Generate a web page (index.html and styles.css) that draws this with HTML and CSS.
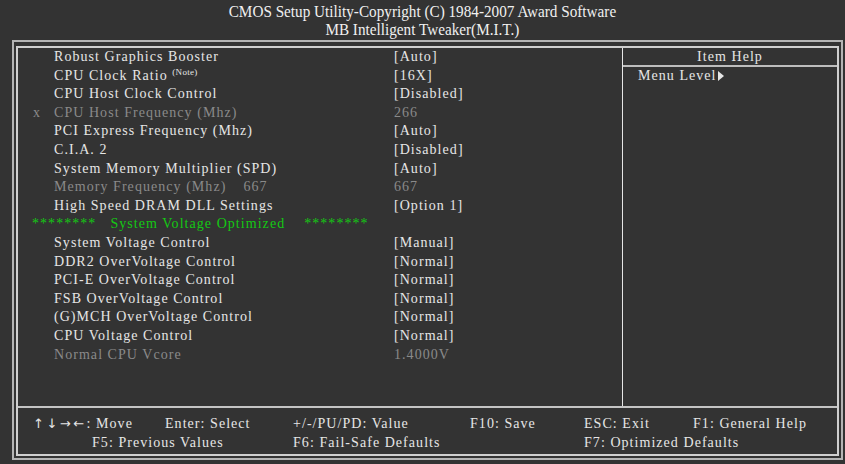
FILE: index.html
```html
<!DOCTYPE html>
<html>
<head>
<meta charset="utf-8">
<link rel="stylesheet" href="styles.css">
</head>
<body>
<header class="title">
  <div class="title-line"><span>CMOS Setup Utility-Copyright (C) 1984-2007 Award Software</span></div>
  <div class="title-line"><span>MB Intelligent Tweaker(M.I.T.)</span></div>
</header>
<div class="frame">
  <div class="panel">
    <div class="main">
      <div class="list">
        <div class="row"><span class="mark"></span><span class="label">Robust Graphics Booster</span><span class="value">[Auto]</span></div>
        <div class="row"><span class="mark"></span><span class="label">CPU Clock Ratio <sup class="note">(Note)</sup></span><span class="value">[16X]</span></div>
        <div class="row"><span class="mark"></span><span class="label">CPU Host Clock Control</span><span class="value">[Disabled]</span></div>
        <div class="row dim"><span class="mark">x</span><span class="label">CPU Host Frequency (Mhz)</span><span class="value">266</span></div>
        <div class="row"><span class="mark"></span><span class="label">PCI Express Frequency (Mhz)</span><span class="value">[Auto]</span></div>
        <div class="row"><span class="mark"></span><span class="label">C.I.A. 2</span><span class="value">[Disabled]</span></div>
        <div class="row"><span class="mark"></span><span class="label">System Memory Multiplier (SPD)</span><span class="value">[Auto]</span></div>
        <div class="row dim"><span class="mark"></span><span class="label">Memory Frequency (Mhz)<span class="inline-val">667</span></span><span class="value">667</span></div>
        <div class="row"><span class="mark"></span><span class="label">High Speed DRAM DLL Settings</span><span class="value">[Option 1]</span></div>
        <div class="section"><span class="stars">********</span><span class="section-name">System Voltage Optimized</span><span class="stars stars-r">********</span></div>
        <div class="row"><span class="mark"></span><span class="label">System Voltage Control</span><span class="value">[Manual]</span></div>
        <div class="row"><span class="mark"></span><span class="label">DDR2 OverVoltage Control</span><span class="value">[Normal]</span></div>
        <div class="row"><span class="mark"></span><span class="label">PCI-E OverVoltage Control</span><span class="value">[Normal]</span></div>
        <div class="row"><span class="mark"></span><span class="label">FSB OverVoltage Control</span><span class="value">[Normal]</span></div>
        <div class="row"><span class="mark"></span><span class="label">(G)MCH OverVoltage Control</span><span class="value">[Normal]</span></div>
        <div class="row"><span class="mark"></span><span class="label">CPU Voltage Control</span><span class="value">[Normal]</span></div>
        <div class="row dim"><span class="mark"></span><span class="label">Normal CPU Vcore</span><span class="value">1.4000V</span></div>
      </div>
      <div class="help">
        <div class="help-head">Item Help</div>
        <div class="help-body">Menu Level<svg class="tri" width="6" height="10" viewBox="0 0 6 10"><path d="M0 0 L6 5 L0 10 Z" fill="#e6e6e6"/></svg></div>
      </div>
    </div>
    <div class="footer">
      <span class="k c1"><span class="arrows">↑↓→←</span>: Move</span>
      <span class="k c2">Enter: Select</span>
      <span class="k c3">+/-/PU/PD: Value</span>
      <span class="k c4">F10: Save</span>
      <span class="k c5">ESC: Exit</span>
      <span class="k c6">F1: General Help</span>
      <span class="k r2 f5">F5: Previous Values</span>
      <span class="k r2 c3">F6: Fail-Safe Defaults</span>
      <span class="k r2 f7">F7: Optimized Defaults</span>
    </div>
  </div>
</div>
</body>
</html>
```

FILE: styles.css
```css
html, body {
  margin: 0;
  padding: 0;
  background: #333333;
}
body {
  width: 845px;
  height: 464px;
  overflow: hidden;
  color: #e6e6e6;
  font-family: "Liberation Serif", "Times New Roman", serif;
  font-size: 14px;
  letter-spacing: 1.05px;
}
.title {
  height: 40px;
  padding-top: 3px;
  box-sizing: border-box;
  text-align: center;
  font-size: 17px;
  letter-spacing: 0;
  line-height: 18px;
  color: #f0f0f0;
}
.title-line span {
  display: inline-block;
  transform: scaleX(0.895);
}
.frame {
  margin: 0 2px 4px 12px;
  border: 2px solid #b4b4b4;
  padding: 4px 2px 2px 2px;
}
.panel {
  border: 2px solid #cfcfcf;
  height: 406px;
  display: flex;
  flex-direction: column;
}
.main {
  display: flex;
  height: 358px;
}
.list {
  width: 604px;
}
.row {
  display: grid;
  grid-template-columns: 36px 340px 1fr;
  line-height: 18.6px;
  height: 18.6px;
  white-space: nowrap;
}
.mark {
  padding-left: 15px;
}
.dim {
  color: #8a8a8a;
}
.note {
  font-size: 9px;
  letter-spacing: 0.3px;
  vertical-align: 5px;
  line-height: 0;
}
.inline-val {
  margin-left: 17px;
}
.section {
  height: 18.6px;
  line-height: 18.6px;
  padding-left: 14px;
  color: #14c814;
  white-space: nowrap;
}
.section-name {
  margin-left: 14px;
}
.stars-r {
  margin-left: 19px;
}
.help {
  flex: 1;
  border-left: 1px solid #e6e6e6;
}
.help-head {
  height: 17px;
  line-height: 17px;
  text-align: center;
  border-bottom: 2px solid #bdbdbd;
}
.help-body {
  padding-left: 15px;
  line-height: 18.6px;
  height: 18.6px;
  white-space: nowrap;
}
.tri {
  margin-left: 1px;
  vertical-align: -1px;
}
.footer {
  border-top: 2px solid #c4c4c4;
  flex: 1;
  display: grid;
  grid-template-columns: 132px 128px 177px 114px 109px 1fr;
  grid-template-rows: 19px 19px;
  padding: 6px 0 0 15px;
  line-height: 19px;
  white-space: nowrap;
}
.arrows {
  font-family: "DejaVu Sans", sans-serif;
  font-size: 13px;
  letter-spacing: 2.5px;
}
.c1 { grid-column: 1; grid-row: 1; }
.c2 { grid-column: 2; grid-row: 1; }
.c3 { grid-column: 3; grid-row: 1; }
.c4 { grid-column: 4; grid-row: 1; }
.c5 { grid-column: 5; grid-row: 1; }
.c6 { grid-column: 6; grid-row: 1; }
.r2 { grid-row: 2; }
.f5 { grid-column: 1 / 3; padding-left: 59px; }
.f7 { grid-column: 5 / 7; }
```
